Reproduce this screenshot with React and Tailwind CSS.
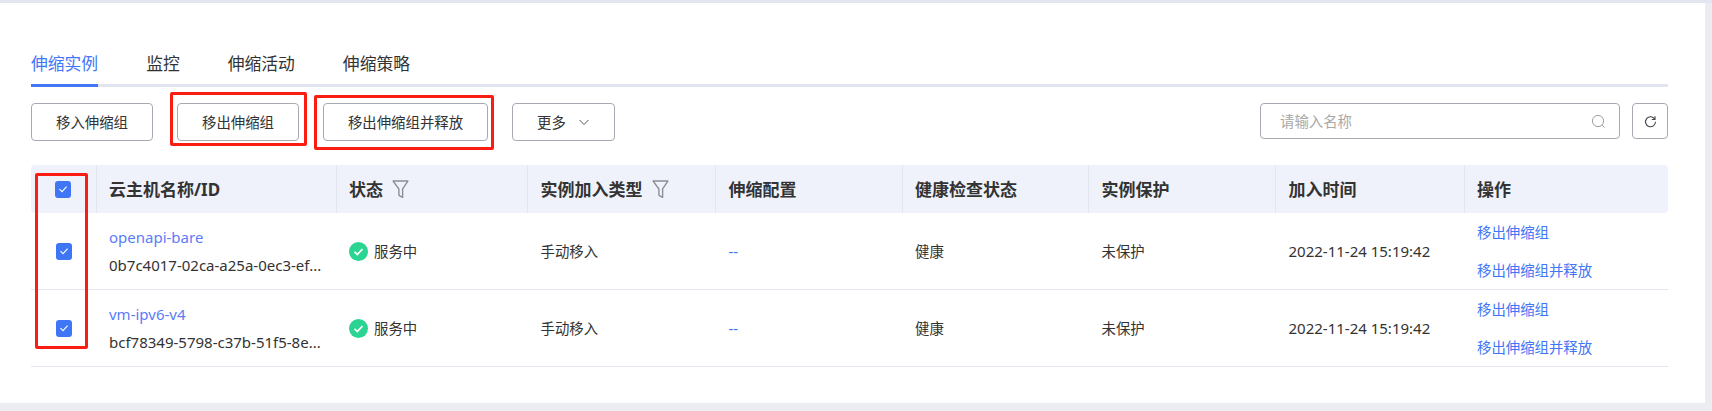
const FONT = "font-['Noto_Sans_CJK_SC',sans-serif]";
const LATIN = "font-['Noto_Sans',sans-serif] text-[15px]";

const columns = [
  { label: <>云主机名称<span className="font-['Noto_Sans',sans-serif]">/ID</span></>, key: "name" },
  { label: "状态", key: "status", filter: true },
  { label: "实例加入类型", key: "type", filter: true },
  { label: "伸缩配置", key: "config" },
  { label: "健康检查状态", key: "health" },
  { label: "实例保护", key: "protect" },
  { label: "加入时间", key: "time" },
  { label: "操作", key: "ops" },
];

const rows = [
  { name: "openapi-bare", id: "0b7c4017-02ca-a25a-0ec3-ef..." },
  { name: "vm-ipv6-v4", id: "bcf78349-5798-c37b-51f5-8e..." },
];

const GRID = "grid grid-cols-[65.5px_240px_191.5px_188px_186.5px_186.5px_187px_188.5px_203.5px]";

const Check = () => (
  <span className="flex h-[17px] w-4 items-center justify-center rounded-[3px] bg-[#3f76f6]">
    <svg width="10" height="10" viewBox="0 0 10 10" fill="none" stroke="#fff" strokeWidth="1.1">
      <path d="M1.5 5.2 4 7.6 8.6 2.6" />
    </svg>
  </span>
);

const Funnel = () => (
  <svg width="17" height="19" viewBox="0 0 16 18" fill="none" stroke="#8b8d96" strokeWidth="1.3" className="shrink-0">
    <path d="M1 1h14L10 8.5V16.5L6.5 14.5V8.5Z" strokeLinejoin="round" />
  </svg>
);

const Btn = ({ children, w }) => (
  <button className={`flex h-[38px] items-center justify-center rounded-[4px] border border-[#a9a9b3] bg-white text-[14.4px] text-[#333] ${w}`}>
    {children}
  </button>
);

const Tab = ({ children, active }) => (
  <div className={`flex h-[36px] items-start border-b-[3px] text-[16.8px] leading-[24px] ${active ? "border-[#4177f6] text-[#4177f6]" : "border-transparent text-[#333]"}`}>
    {children}
  </div>
);

const RedBox = ({ className }) => (
  <div className={`pointer-events-none absolute rounded-[2px] border-[3px] border-[#fb1c12] ${className}`} />
);

export default function App() {
  return (
    <div className={`relative h-[411px] w-[1712px] overflow-hidden bg-[#ebedf2] pt-[3px] pr-[7px] ${FONT}`}>
      <div className="absolute inset-x-0 top-0 h-[3px] bg-[#e4e6ef]" />

      <div className="h-[400px] bg-white pt-[48px] pr-[37px] pl-[31px]">
        {/* tabs */}
        <div className="flex h-[36px] gap-[48px] border-b-[3px] border-[#e2e5f0]">
          <Tab active>伸缩实例</Tab>
          <Tab>监控</Tab>
          <Tab>伸缩活动</Tab>
          <Tab>伸缩策略</Tab>
        </div>

        {/* toolbar */}
        <div className="mt-[16px] flex items-start gap-[24px]">
          <Btn w="w-[122px]">移入伸缩组</Btn>
          <Btn w="w-[122px]">移出伸缩组</Btn>
          <Btn w="w-[165px]">移出伸缩组并释放</Btn>
          <Btn w="w-[103px]">
            更多
            <svg width="12" height="12" viewBox="0 0 12 12" fill="none" stroke="#555" strokeWidth="1" className="ml-[12px]">
              <path d="M1.5 4 6 8.5 10.500 4" />
            </svg>
          </Btn>
          <div className="ml-auto flex gap-[12px]">
            <div className="flex h-[36px] w-[360px] items-center justify-between rounded-[4px] border border-[#a9a9b3] pr-[13px] pl-[19px] text-[14.4px] text-[#a8a8a8]">
              请输入名称
              <svg width="15" height="15" viewBox="0 0 15 15" fill="none" stroke="#a0a0a0" strokeWidth="1">
                <circle cx="7" cy="7" r="5.6" />
                <path d="M11 11l2.500 2.500" />
              </svg>
            </div>
            <div className="flex h-[36px] w-[36px] items-center justify-center rounded-[4px] border border-[#a9a9b3]">
              <svg width="13" height="13" viewBox="0 0 13 13" fill="none" stroke="#444" strokeWidth="1.1">
                <path d="M10.800 4.200A5 5 0 1 0 11.500 6.800" />
                <path d="M11 1.200V4.500H7.800" />
              </svg>
            </div>
          </div>
        </div>

        {/* table */}
        <div className="mt-[24px]">
          <div className={`${GRID} h-[48px] rounded-[4px] bg-[#eff2fb]`}>
            <div className="flex items-center justify-center border-r border-[#e2e5ee]">
              <Check />
            </div>
            {columns.map((c, i) => (
              <div
                key={c.key}
                className={`flex items-center gap-[9px] pl-[12.500px] text-[17px] font-bold text-[#333] ${i < columns.length - 1 ? "border-r border-[#e2e5ee]" : ""}`}
              >
                <span>{c.label}</span>
                {c.filter && <Funnel />}
              </div>
            ))}
          </div>

          {rows.map((r) => (
            <div key={r.name} className={`${GRID} h-[77px] border-b border-[#e5e7ef] text-[14.4px] text-[#333]`}>
              <div className="flex items-center justify-center">
                <Check />
              </div>
              <div className={`flex flex-col justify-center gap-[6px] pl-[12.500px] leading-[22px] ${LATIN}`}>
                <span className="text-[#5b7cf8]">{r.name}</span>
                <span className="whitespace-nowrap">{r.id}</span>
              </div>
              <div className="flex items-center gap-[6px] pl-[12.500px]">
                <svg width="19" height="19" viewBox="0 0 19 19" className="shrink-0">
                  <circle cx="9.500" cy="9.500" r="9.500" fill="#2bd490" />
                  <path d="M5.500 9.800 8.300 12.500 13.500 7" fill="none" stroke="#fff" strokeWidth="1.800" />
                </svg>
                服务中
              </div>
              <div className="flex items-center pl-[12.500px]">手动移入</div>
              <div className={`flex items-center pl-[12.500px] text-[#4177f6] ${LATIN}`}>--</div>
              <div className="flex items-center pl-[12.500px]">健康</div>
              <div className="flex items-center pl-[12.500px]">未保护</div>
              <div className={`flex items-center pl-[12.500px] whitespace-nowrap ${LATIN}`}>2022-11-24 15:19:42</div>
              <div className="flex flex-col justify-center gap-[16px] pl-[12.500px] leading-[22px] text-[#4177f6]">
                <span>移出伸缩组</span>
                <span>移出伸缩组并释放</span>
              </div>
            </div>
          ))}
        </div>
      </div>

      {/* red annotation boxes */}
      <RedBox className="top-[92px] left-[170px] h-[54px] w-[137px]" />
      <RedBox className="top-[95px] left-[314px] h-[55px] w-[180px]" />
      <RedBox className="top-[173px] left-[35px] h-[176px] w-[53px]" />
    </div>
  );
}
